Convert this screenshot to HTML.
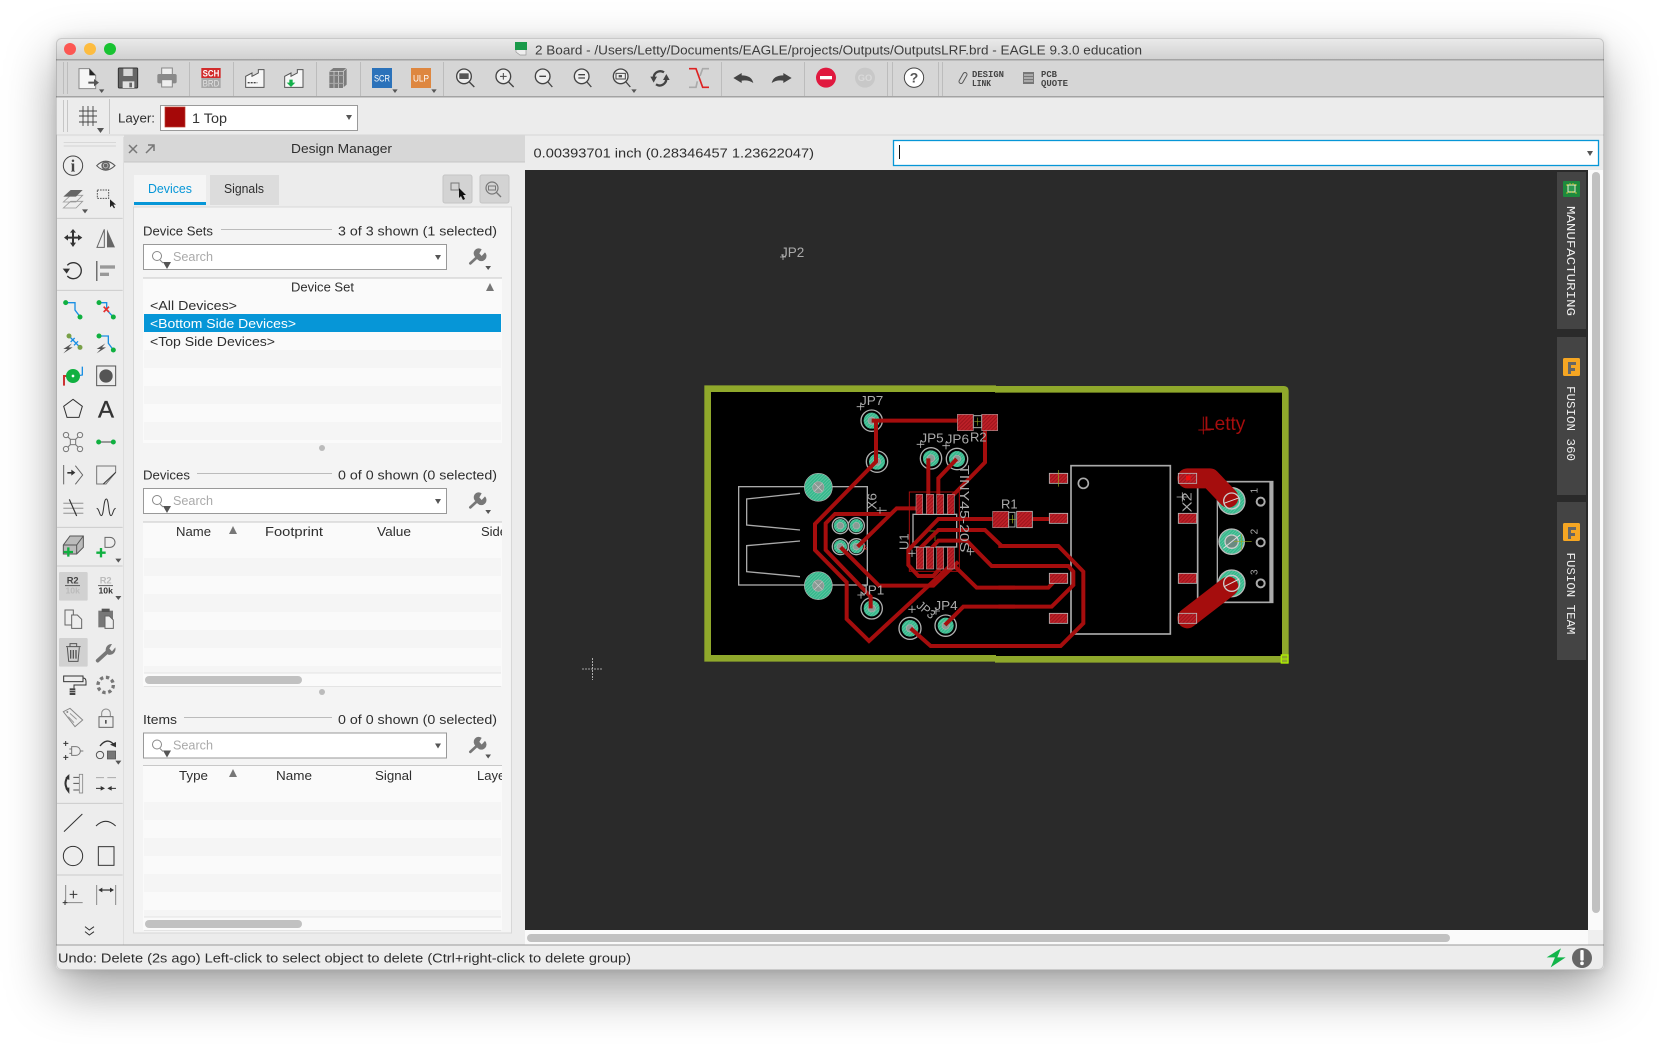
<!DOCTYPE html>
<html><head><meta charset="utf-8"><title>EAGLE</title>
<style>
html,body{margin:0;padding:0;background:#fff;width:1659px;height:1044px;overflow:hidden}
#sh{position:absolute;left:56px;top:38px;width:1548px;height:932px;border-radius:5px;box-shadow:0 20px 50px rgba(0,0,0,.38),0 0 10px rgba(0,0,0,.12)}
svg{position:absolute;left:0;top:0}
text{font-family:"Liberation Sans",sans-serif}
.t{font-size:13px;fill:#2e2e2e}
.m{font-family:"Liberation Mono",monospace;font-size:12px;fill:#eee}
.vt{stroke:#a50d0d;stroke-width:12;fill:none}
.gl{fill:#aaa;font-size:38px}
</style></head><body>
<div id="sh"></div>
<svg width="1659" height="1044" viewBox="0 0 1659 1044" xmlns="http://www.w3.org/2000/svg">
<defs>
<linearGradient id="tb" x1="0" y1="0" x2="0" y2="1"><stop offset="0" stop-color="#ebebeb"/><stop offset="1" stop-color="#d1d1d1"/></linearGradient>
<clipPath id="win"><rect x="56" y="38" width="1548" height="932" rx="5"/></clipPath>
<clipPath id="tbl"><rect x="143" y="270" width="359" height="670"/></clipPath>
<pattern id="h" width="8" height="8" patternUnits="userSpaceOnUse" patternTransform="rotate(-45)"><rect width="8" height="8" fill="#bd2028"/><rect width="8" height="3" fill="#9c141b"/></pattern>
<pattern id="g" width="7" height="7" patternUnits="userSpaceOnUse" patternTransform="rotate(-45)"><rect width="7" height="7" fill="#35b88c"/><rect width="7" height="2" fill="#6cc9a8"/></pattern>
</defs>
<g clip-path="url(#win)">
<rect x="56" y="38" width="1548" height="932" fill="#ececec"/>
<!-- title -->
<rect x="56" y="38" width="1548" height="21" fill="url(#tb)"/>
<rect x="56" y="59" width="1548" height="1.5" fill="#a3a3a3"/>
<circle cx="70" cy="49" r="6" fill="#fc5753"/><circle cx="90" cy="49" r="6" fill="#fdbc40"/><circle cx="110" cy="49" r="6" fill="#19c332"/>
<path d="M516,43H526V55H520L516,52Z" fill="#eee" stroke="#999" stroke-width=".7"/><rect x="515" y="42" width="12" height="8" fill="#1a9a4a"/>
<text x="535" y="54.5" class="t" textLength="607" lengthAdjust="spacingAndGlyphs" style="fill:#3c3c3c">2 Board - /Users/Letty/Documents/EAGLE/projects/Outputs/OutputsLRF.brd - EAGLE 9.3.0 education</text>
<!-- toolbar 1 -->
<rect x="56" y="60.5" width="1548" height="36" fill="#d6d6d6"/>
<rect x="56" y="96" width="1548" height="1.5" fill="#a3a3a3"/>
<g fill="#bcbcbc"><rect x="63" y="62" width="1" height="32"/><rect x="67" y="62" width="1" height="32"/><rect x="189" y="62" width="1" height="34"/><rect x="233" y="62" width="1" height="34"/><rect x="316" y="62" width="1" height="34"/><rect x="360" y="62" width="1" height="34"/><rect x="443" y="62" width="1" height="34"/><rect x="721" y="62" width="1" height="34"/><rect x="804" y="62" width="1" height="34"/><rect x="887" y="62" width="1" height="34"/><rect x="892" y="62" width="1" height="34"/><rect x="938" y="62" width="1" height="34"/><rect x="942" y="62" width="1" height="34"/></g>
<g transform="translate(60 58) scale(.33333)">
<path d="M57,32H88L107,52V92H57Z" fill="#f6f6f6" stroke="#888" stroke-width="3"/><path d="M88,32L107,52H88Z" fill="#222"/>
<path d="M85,71H102V63L117,74L102,85V77H85Z" fill="#555"/><path d="M117,94H133L125,105Z" fill="#555"/>
<rect x="175" y="30" width="58" height="60" rx="3" fill="#666" stroke="#333" stroke-width="3"/><rect x="190" y="32" width="28" height="22" fill="#d6d6d6"/><rect x="188" y="70" width="35" height="20" fill="#e2e2e2"/><rect x="208" y="74" width="8" height="14" fill="#666"/>
<rect x="305" y="30" width="32" height="22" fill="#eee" stroke="#888" stroke-width="3"/><rect x="292" y="48" width="58" height="28" rx="5" fill="#8a8a8a"/><rect x="305" y="65" width="32" height="22" fill="#eee" stroke="#888" stroke-width="3"/>
<rect x="424" y="30" width="58" height="30" fill="#d12b2b"/><rect x="424" y="60" width="58" height="30" fill="#a8a8a8"/>
<text x="428" y="56" textLength="50" lengthAdjust="spacingAndGlyphs" style="font-size:27px;fill:#fff;font-weight:bold">SCH</text>
<text x="428" y="86" textLength="50" lengthAdjust="spacingAndGlyphs" style="font-size:27px;fill:#e2e2e2">BRD</text>
<path d="M557,88V55L576,45V55L595,45V35H612V88Z" fill="#f7f7f7" stroke="#555" stroke-width="3"/><path d="M563,74H592" stroke="#444" stroke-width="4" stroke-dasharray="6 3"/>
<path d="M674,88V55L693,45V55L712,45V35H729V88Z" fill="#f7f7f7" stroke="#555" stroke-width="3"/><path d="M688,65H698V74H706L693,87L680,74H688Z" fill="#12b04a"/>
<path d="M808,40L820,30H860V80L848,90H808Z" fill="#7c7c7c"/><path d="M822,40V90M836,40V90M850,40V90M808,40H850L860,30" stroke="#ddd" stroke-width="2" fill="none"/><path d="M808,52H850M808,76H850" stroke="#aaa" stroke-width="3"/>
<rect x="936" y="30" width="60" height="60" fill="#2b72ba"/><text x="942" y="70" textLength="48" lengthAdjust="spacingAndGlyphs" style="font-size:27px;fill:#fff">SCR</text><path d="M997,94H1013L1005,105Z" fill="#555"/>
<rect x="1053" y="30" width="60" height="60" fill="#de8740"/><text x="1059" y="70" textLength="48" lengthAdjust="spacingAndGlyphs" style="font-size:27px;fill:#fff">ULP</text><path d="M1114,94H1130L1122,105Z" fill="#555"/>
<g fill="#eee" stroke="#444" stroke-width="4"><path d="M1228,72L1243,87" fill="none"/><circle cx="1212" cy="55" r="22"/></g><rect x="1198" y="46" width="28" height="17" fill="#555"/>
<g fill="#eee" stroke="#444" stroke-width="4"><path d="M1346,72L1361,87" fill="none"/><circle cx="1330" cy="55" r="22"/><path d="M1330,45V65M1320,55H1340" fill="none" stroke-width="3"/></g>
</g>
<g transform="translate(510 58) scale(.33333)">
<g fill="#eee" stroke="#444" stroke-width="4"><path d="M114,72L127,87" fill="none"/><circle cx="98" cy="55" r="22"/><path d="M88,55H108" fill="none"/>
<path d="M231,72L244,87" fill="none"/><circle cx="215" cy="55" r="22"/><path d="M205,50H225M205,60H225" fill="none"/>
<path d="M348,72L361,87" fill="none"/><circle cx="332" cy="55" r="22"/><rect x="318" y="46" width="28" height="17" stroke-width="3"/><rect x="326" y="51" width="10" height="7" fill="#555" stroke="none"/></g>
<path d="M364,94H380L372,105Z" fill="#555"/>
<path d="M431,58A20,20 0 0 1 462,43" fill="none" stroke="#444" stroke-width="7"/><path d="M469,64A20,20 0 0 1 438,79" fill="none" stroke="#444" stroke-width="7"/><path d="M421,56H441L431,74Z" fill="#444"/><path d="M459,66H479L469,48Z" fill="#444"/>
<path d="M537,32H558L578,88H597" fill="none" stroke="#d22" stroke-width="5"/><path d="M597,32H578L570,54M562,70L558,88H537" fill="none" stroke="#aaa" stroke-width="5"/>
<path d="M670,60L695,45V52Q725,52 730,75Q715,65 695,68V75Z" fill="#444"/><path d="M845,60L820,45V52Q790,52 785,75Q800,65 820,68V75Z" fill="#444"/>
<circle cx="948" cy="59" r="30" fill="#e0193f"/><rect x="930" y="54" width="36" height="10" fill="#fff"/>
<circle cx="1065" cy="59" r="30" fill="#c8c8c8"/><text x="1065" y="69" text-anchor="middle" style="font-size:28px;fill:#d9d9d9;font-weight:bold">GO</text>
<circle cx="1212" cy="59" r="29" fill="#fff" stroke="#444" stroke-width="3"/><text x="1212" y="74" text-anchor="middle" style="font-size:42px;fill:#555;font-weight:bold">?</text>
</g>
<!-- design link -->
<g stroke="#555" fill="none" stroke-width="1"><rect x="961" y="72" width="4" height="12" rx="2" transform="rotate(30 963 78)"/></g>
<text x="972" y="77" textLength="32" lengthAdjust="spacingAndGlyphs" style="font-size:9.5px;fill:#444;font-family:'Liberation Mono',monospace;font-weight:bold">DESIGN</text>
<text x="972" y="86" textLength="19" lengthAdjust="spacingAndGlyphs" style="font-size:9.5px;fill:#444;font-family:'Liberation Mono',monospace;font-weight:bold">LINK</text>
<rect x="1023" y="72" width="11" height="12" fill="#777"/><path d="M1024,75H1033M1024,78H1033M1024,81H1033" stroke="#ddd"/>
<text x="1041" y="77" textLength="16" lengthAdjust="spacingAndGlyphs" style="font-size:9.5px;fill:#444;font-family:'Liberation Mono',monospace;font-weight:bold">PCB</text>
<text x="1041" y="86" textLength="27" lengthAdjust="spacingAndGlyphs" style="font-size:9.5px;fill:#444;font-family:'Liberation Mono',monospace;font-weight:bold">QUOTE</text>
<!-- toolbar 2 -->
<rect x="56" y="97.5" width="1548" height="37" fill="#ececec"/><rect x="56" y="134.5" width="1548" height="1" fill="#d6d6d6"/>
<g fill="#c6c6c6"><rect x="63" y="100" width="1" height="32"/><rect x="67" y="100" width="1" height="32"/><rect x="109" y="99" width="1" height="35"/></g>
<path d="M83,106V126M88,106V126M93,106V126M79,111H97M79,116H97M79,122H97" stroke="#444" stroke-width=".9" fill="none"/>
<path d="M97,128H104L100.500,133Z" fill="#555"/>
<text x="118" y="122.500" class="t" textLength="37" lengthAdjust="spacingAndGlyphs">Layer:</text>
<rect x="160.500" y="105.500" width="197" height="25" fill="#fff" stroke="#9a9a9a"/>
<rect x="165" y="107" width="20" height="20" fill="#a50808" stroke="#c04030" stroke-width=".7"/>
<text x="192" y="123" textLength="35" lengthAdjust="spacingAndGlyphs" style="font-size:14px;fill:#333">1 Top</text>
<path d="M346,115H352L349,120Z" fill="#555"/>
<!-- coord bar -->
<text x="533.500" y="157.500" class="t" textLength="280.500" lengthAdjust="spacingAndGlyphs">0.00393701 inch (0.28346457 1.23622047)</text>
<rect x="893.500" y="140.500" width="705" height="25" fill="#fff" stroke="#0696d7" stroke-width="1.300"/>
<rect x="899" y="145" width="1" height="14" fill="#111"/><path d="M1587,151H1593L1590,156Z" fill="#555"/>
<!-- left toolbar -->
<rect x="56" y="135" width="1" height="810" fill="#d0d0d0"/>
<rect x="57" y="137" width="66" height="808" fill="#ededed"/>
<rect x="123" y="137" width="1" height="808" fill="#dedede"/>
<g fill="none" stroke="#ccc" stroke-width="2"><path d="M41,37H198M41,48H198" transform="translate(50 130) scale(.33333)"/></g>
<g transform="translate(50 130) scale(.33333)">
<path d="M20,265H218M20,481H218M20,1192H218" stroke="#ccc" stroke-width="3"/>
<circle cx="69" cy="107" r="29" fill="none" stroke="#444" stroke-width="3"/><text x="69" y="125" text-anchor="middle" style="font-family:'Liberation Serif',serif;font-size:50px;font-weight:bold;fill:#444">i</text>
<path d="M140,107Q167,80 195,107Q167,134 140,107Z" fill="none" stroke="#555" stroke-width="3"/><circle cx="167" cy="107" r="13" fill="#666"/><circle cx="167" cy="107" r="7" fill="none" stroke="#ddd" stroke-width="2"/>
<path d="M40,234L62,214H98L78,234Z M40,216L62,196H98L78,216Z" fill="none" stroke="#999" stroke-width="2.500"/><path d="M40,200L62,180H98L78,200Z" fill="#666"/><path d="M96,238H114L105,250Z" fill="#555"/>
<rect x="142" y="180" width="34" height="25" fill="none" stroke="#555" stroke-width="3" stroke-dasharray="5 3"/><path d="M180,208V232L186,226L192,235L195,233L190,224H198Z" fill="#222"/>
<path d="M69,297L60,308H66V320H54V314L42,323L54,332V326H66V338H60L69,351L78,338H72V326H84V332L97,323L84,314V320H72V308H78Z" fill="#333"/>
<path d="M141,352L163,298V352Z" fill="none" stroke="#666" stroke-width="3"/><path d="M171,298L195,352H171Z" fill="#666"/>
<path d="M52,406A24,24 0 1 1 52,438" fill="none" stroke="#333" stroke-width="4"/><path d="M38,416H60L50,431Z" fill="#333"/>
<rect x="139" y="393" width="3" height="60" fill="#333"/><rect x="150" y="406" width="45" height="10" fill="#999"/><rect x="150" y="428" width="27" height="10" fill="#999"/>
<path d="M47,518H75V540L90,560" fill="none" stroke="#1a8fe3" stroke-width="4"/><circle cx="47" cy="518" r="7.500" fill="#10b040"/><circle cx="90" cy="561" r="7.500" fill="#10b040"/>
<path d="M147,518H170V540L190,561" fill="none" stroke="#1a8fe3" stroke-width="4"/><circle cx="147" cy="518" r="7.500" fill="#10b040"/><circle cx="190" cy="561" r="7.500" fill="#10b040"/><path d="M161,530L177,546M177,530L161,546" stroke="#e63030" stroke-width="5"/>
<path d="M57,618L90,652M62,636L74,624M72,646L84,634" fill="none" stroke="#1a8fe3" stroke-width="4"/><circle cx="57" cy="618" r="7.500" fill="#79a048"/><circle cx="90" cy="652" r="7.500" fill="#79a048"/><path d="M66,640L40,657H52L40,670L68,652H56Z" fill="#555"/>
<path d="M147,618H175V640L190,660" fill="none" stroke="#1a8fe3" stroke-width="4"/><circle cx="147" cy="618" r="7.500" fill="#10b040"/><circle cx="190" cy="660" r="7.500" fill="#10b040"/><path d="M166,640L140,657H152L140,670L168,652H156Z" fill="#555"/>
<path d="M42,767V738H50" fill="none" stroke="#c33" stroke-width="6"/><path d="M80,738L97,735V710" fill="none" stroke="#1a8fe3" stroke-width="4"/><circle cx="69" cy="738" r="21" fill="#10b040"/><circle cx="69" cy="738" r="4" fill="#fff"/>
<rect x="140" y="708" width="57" height="59" fill="none" stroke="#555" stroke-width="3"/><circle cx="168" cy="738" r="20" fill="#555"/>
<path d="M69,808L97,829L87,862H51L41,829Z" fill="none" stroke="#333" stroke-width="3"/>
<text x="168" y="862" text-anchor="middle" style="font-size:72px;fill:#333;stroke:#333;stroke-width:1">A</text>
<g fill="none" stroke="#777" stroke-width="3"><path d="M48,915L90,957M90,915L48,957"/><circle cx="48" cy="915" r="8" fill="#eee"/><circle cx="90" cy="915" r="8" fill="#eee"/><circle cx="48" cy="957" r="8" fill="#eee"/><circle cx="90" cy="957" r="8" fill="#eee"/><rect x="61" y="928" width="16" height="16" fill="#eee"/></g>
<path d="M146,936H190" stroke="#888" stroke-width="5"/><circle cx="146" cy="936" r="7.500" fill="#10b040"/><circle cx="190" cy="936" r="7.500" fill="#10b040"/>
<path d="M41,1005V1063M76,1007L98,1035L76,1063" fill="none" stroke="#666" stroke-width="3"/><path d="M52,1026H64V1019L76,1028L64,1037V1031H52Z" fill="#333"/>
<path d="M140,1008H197V1027L168,1062H140Z" fill="none" stroke="#777" stroke-width="3"/><path d="M197,1027L160,1062" stroke="#333" stroke-width="3"/>
<path d="M40,1120H100M40,1135H100M40,1150H100" stroke="#aaa" stroke-width="4"/><path d="M58,1108L80,1158" stroke="#333" stroke-width="3.500"/>
<path d="M140,1135c8,0 8,22 14,22c8,0 6,-50 15,-50c8,0 6,50 14,50c6,0 6,-22 14,-22" fill="none" stroke="#333" stroke-width="3"/>
</g>
<g transform="translate(50 540) scale(.33333)">
<path d="M20,78H218M20,790H218M20,1005H218" stroke="#ccc" stroke-width="3"/>
<path d="M40,15L60,-12H100V22L80,42H40Z" fill="#bbb" stroke="#555" stroke-width="3"/><path d="M40,15H80V42M80,15L100,-12" fill="none" stroke="#555" stroke-width="3"/>
<path d="M55,22V50M41,36H69" stroke="#10b040" stroke-width="7"/>
<path d="M165,-8H180A14,14 0 0 1 180,22H165Z" fill="none" stroke="#666" stroke-width="3"/><path d="M153,24V52M139,38H167" stroke="#10b040" stroke-width="7"/><path d="M196,56H214L205,68Z" fill="#555"/>
<rect x="27" y="96" width="86" height="86" rx="4" fill="#d1d1d1"/>
<text x="68" y="131" text-anchor="middle" style="font-size:28px;font-weight:bold;fill:#444">R2</text><path d="M45,137H90" stroke="#444" stroke-width="2.500"/><text x="68" y="161" text-anchor="middle" style="font-size:26px;font-weight:bold;fill:#bbb">10k</text>
<text x="167" y="131" text-anchor="middle" style="font-size:28px;font-weight:bold;fill:#bbb">R2</text><path d="M144,137H189" stroke="#444" stroke-width="2.500"/><text x="167" y="161" text-anchor="middle" style="font-size:26px;font-weight:bold;fill:#333">10k</text><path d="M196,168H214L205,180Z" fill="#555"/>
<path d="M45,210H70V255H45Z" fill="#eee" stroke="#666" stroke-width="3"/><path d="M65,225H82L95,238V265H65Z" fill="#eee" stroke="#666" stroke-width="3"/>
<rect x="145" y="212" width="44" height="50" fill="#777"/><rect x="155" y="206" width="24" height="10" fill="#555"/><path d="M165,228H178L190,240V265H165Z" fill="#eee" stroke="#666" stroke-width="3"/>
<rect x="27" y="294" width="86" height="86" rx="4" fill="#d1d1d1"/>
<path d="M48,320H92M60,320V311H80V320M52,322L56,364H84L88,322" fill="none" stroke="#555" stroke-width="3"/><path d="M62,330V356M70,330V356M78,330V356" stroke="#555" stroke-width="4"/>
<path d="M143,362L176,332" stroke="#777" stroke-width="11" stroke-linecap="round"/><path d="M168,336A18,18 0 0 1 186,312L178,326L186,334L196,322A18,18 0 0 1 174,344Z" fill="#777"/>
<rect x="41" y="408" width="58" height="17" fill="#eee" stroke="#333" stroke-width="3"/><path d="M99,414Q108,414 108,424V435H72V445" fill="none" stroke="#333" stroke-width="3"/><rect x="59" y="445" width="17" height="20" fill="#444"/><path d="M59,451H76M59,458H76" stroke="#ddd" stroke-width="2"/>
<circle cx="167" cy="435" r="23" fill="none" stroke="#777" stroke-width="10" stroke-dasharray="10 8.060"/>
<path d="M40,515L60,505L98,540L75,560Z" fill="none" stroke="#888" stroke-width="3"/><circle cx="52" cy="516" r="3" fill="#888"/><path d="M60,520L80,538M55,530L72,548" stroke="#999" stroke-width="3"/>
<rect x="147" y="530" width="42" height="32" fill="none" stroke="#666" stroke-width="3"/><path d="M155,530V520A13,13 0 0 1 181,520V530" fill="none" stroke="#888" stroke-width="3"/><rect x="165" y="540" width="5" height="11" fill="#555"/>
<path d="M47,603V618M40,610H55M47,645V660M40,652H55" stroke="#333" stroke-width="3"/><path d="M65,620H78A13,13 0 0 1 78,646H65ZM92,633H100M58,627H65M58,640H65" fill="none" stroke="#777" stroke-width="3"/>
<path d="M150,618Q170,592 190,612" fill="none" stroke="#333" stroke-width="4"/><path d="M180,614L198,606V622Z" fill="#333"/><circle cx="150" cy="645" r="11" fill="none" stroke="#555" stroke-width="3"/><rect x="172" y="633" width="25" height="24" fill="#777" stroke="#555" stroke-width="2"/><path d="M196,662H214L205,674Z" fill="#555"/>
<path d="M55,708Q38,730 55,752" fill="none" stroke="#333" stroke-width="6"/><path d="M46,714L58,702V720Z M46,746L58,762V742Z" fill="#333"/><path d="M70,712H88M70,730H88M70,750H88" stroke="#555" stroke-width="3"/><rect x="88" y="703" width="10" height="56" fill="none" stroke="#888" stroke-width="2.500"/>
<path d="M138,713H162M172,713H198" stroke="#aaa" stroke-width="3"/><path d="M138,745H155M198,745H182" stroke="#333" stroke-width="3"/><path d="M152,738L165,745L152,752ZM185,738L172,745L185,752Z" fill="#333"/>
<path d="M42,875L97,822" stroke="#333" stroke-width="3"/><path d="M138,858Q167,830 197,858" fill="none" stroke="#333" stroke-width="3"/>
<circle cx="69" cy="948" r="29" fill="none" stroke="#333" stroke-width="3"/><rect x="145" y="920" width="47" height="56" fill="none" stroke="#333" stroke-width="3"/>
<path d="M47,1035V1085M47,1088H98" stroke="#888" stroke-width="3"/><path d="M70,1052V1075M59,1063H82M45,1081V1095M38,1088H52" stroke="#333" stroke-width="3"/>
<path d="M140,1035V1095M197,1035V1095" stroke="#888" stroke-width="3"/><path d="M155,1050H182" stroke="#333" stroke-width="3.500"/><path d="M145,1050L157,1043V1057ZM192,1050L180,1043V1057Z" fill="#333"/>
<path d="M105,1160L118,1170L132,1160M105,1175L118,1185L132,1175" fill="none" stroke="#333" stroke-width="3"/>
</g>
<!-- design manager -->
<rect x="124" y="135" width="401" height="27" fill="#d7d7d7"/><rect x="124" y="161.500" width="401" height="1" fill="#c6c6c6"/>
<path d="M129,145L137,153M137,145L129,153" stroke="#777" stroke-width="1.500"/><path d="M146,153L154,145M148,145H154V151" fill="none" stroke="#777" stroke-width="1.500"/>
<text x="291" y="153" class="t" textLength="101" lengthAdjust="spacingAndGlyphs">Design Manager</text>
<rect x="134" y="175" width="72" height="30" fill="#f5f5f5"/><rect x="134" y="202" width="72" height="3" fill="#0696d7"/>
<rect x="210" y="175" width="69" height="30" fill="#dcdcdc"/>
<text x="148" y="193" class="t" textLength="44" lengthAdjust="spacingAndGlyphs" style="fill:#0696d7">Devices</text>
<text x="224" y="193" class="t" textLength="40" lengthAdjust="spacingAndGlyphs">Signals</text>
<rect x="443" y="175" width="29" height="28" rx="2" fill="#d3d3d3" stroke="#c4c4c4"/><rect x="451" y="183" width="8" height="7" fill="none" stroke="#777"/><path d="M459,188V198L461,196L463,200L465,199L463,195H466Z" fill="#111"/>
<rect x="480" y="175" width="29" height="28" rx="2" fill="#d3d3d3" stroke="#c4c4c4"/><circle cx="492" cy="188" r="6" fill="none" stroke="#777" stroke-width="1.200"/><rect x="488.500" y="186" width="7" height="4" fill="none" stroke="#777"/><path d="M496,192L501,197" stroke="#777" stroke-width="1.300"/>
<rect x="133.500" y="207" width="378" height="726" fill="#f4f4f4" stroke="#d8d8d8"/>
<!-- section titles -->
<g>
<text x="143" y="235.500" class="t" textLength="70" lengthAdjust="spacingAndGlyphs">Device Sets</text><rect x="221" y="229" width="111" height="1" fill="#bbb"/>
<text x="338" y="235.500" class="t" textLength="159" lengthAdjust="spacingAndGlyphs">3 of 3 shown (1 selected)</text>
<text x="143" y="479.500" class="t" textLength="47" lengthAdjust="spacingAndGlyphs">Devices</text><rect x="197" y="473" width="135" height="1" fill="#bbb"/>
<text x="338" y="479.500" class="t" textLength="159" lengthAdjust="spacingAndGlyphs">0 of 0 shown (0 selected)</text>
<text x="143" y="724" class="t" textLength="34" lengthAdjust="spacingAndGlyphs">Items</text><rect x="184" y="717" width="148" height="1" fill="#bbb"/>
<text x="338" y="724" class="t" textLength="159" lengthAdjust="spacingAndGlyphs">0 of 0 shown (0 selected)</text>
</g>
<!-- search boxes -->
<g transform="translate(0 0)"><rect x="143.500" y="244.500" width="303" height="25" fill="#fff" stroke="#999"/><circle cx="157" cy="256" r="4.500" fill="none" stroke="#888"/><path d="M160,260L163,263" stroke="#888"/><path d="M163,262H171L167,269Z" fill="#555"/><text x="173" y="261" class="t" textLength="40" lengthAdjust="spacingAndGlyphs" style="fill:#aaa">Search</text><path d="M435,255H441L438,260Z" fill="#555"/><g transform="translate(125 130) scale(.33333)"><path d="M1036,400L1060,378" stroke="#777" stroke-width="8" stroke-linecap="round"/><path d="M1052,382A15,15 0 0 1 1070,358L1063,370L1070,378L1080,367A15,15 0 0 1 1058,389Z" fill="#777"/><path d="M1081,408H1098L1089.500,420Z" fill="#555"/></g></g>
<g transform="translate(0 244)"><rect x="143.500" y="244.500" width="303" height="25" fill="#fff" stroke="#999"/><circle cx="157" cy="256" r="4.500" fill="none" stroke="#888"/><path d="M160,260L163,263" stroke="#888"/><path d="M163,262H171L167,269Z" fill="#555"/><text x="173" y="261" class="t" textLength="40" lengthAdjust="spacingAndGlyphs" style="fill:#aaa">Search</text><path d="M435,255H441L438,260Z" fill="#555"/><g transform="translate(125 130) scale(.33333)"><path d="M1036,400L1060,378" stroke="#777" stroke-width="8" stroke-linecap="round"/><path d="M1052,382A15,15 0 0 1 1070,358L1063,370L1070,378L1080,367A15,15 0 0 1 1058,389Z" fill="#777"/><path d="M1081,408H1098L1089.500,420Z" fill="#555"/></g></g>
<g transform="translate(0 488.500)"><rect x="143.500" y="244.500" width="303" height="25" fill="#fff" stroke="#999"/><circle cx="157" cy="256" r="4.500" fill="none" stroke="#888"/><path d="M160,260L163,263" stroke="#888"/><path d="M163,262H171L167,269Z" fill="#555"/><text x="173" y="261" class="t" textLength="40" lengthAdjust="spacingAndGlyphs" style="fill:#aaa">Search</text><path d="M435,255H441L438,260Z" fill="#555"/><g transform="translate(125 130) scale(.33333)"><path d="M1036,400L1060,378" stroke="#777" stroke-width="8" stroke-linecap="round"/><path d="M1052,382A15,15 0 0 1 1070,358L1063,370L1070,378L1080,367A15,15 0 0 1 1058,389Z" fill="#777"/><path d="M1081,408H1098L1089.500,420Z" fill="#555"/></g></g>
<!-- table 1 -->
<rect x="143" y="278" width="359" height="165" fill="#fafafa"/><rect x="143" y="277.500" width="359" height="1" fill="#c8c8c8"/>
<g fill="#f5f5f5"><rect x="144" y="350" width="357" height="18"/><rect x="144" y="386" width="357" height="18"/><rect x="144" y="422" width="357" height="18"/></g>
<rect x="144" y="314" width="357" height="18" fill="#0696d7"/>
<text x="291" y="291.500" class="t" textLength="63" lengthAdjust="spacingAndGlyphs">Device Set</text><path d="M486,291L490,283L494,291Z" fill="#777"/>
<text x="150" y="310" class="t" textLength="87" lengthAdjust="spacingAndGlyphs">&lt;All Devices&gt;</text>
<text x="150" y="328" class="t" textLength="146" lengthAdjust="spacingAndGlyphs" style="fill:#fff">&lt;Bottom Side Devices&gt;</text>
<text x="150" y="346" class="t" textLength="125" lengthAdjust="spacingAndGlyphs">&lt;Top Side Devices&gt;</text>
<circle cx="322" cy="448" r="3" fill="#bbb"/>
<!-- table 2 -->
<rect x="143" y="522" width="359" height="164" fill="#fafafa"/><rect x="143" y="521.500" width="359" height="1" fill="#c8c8c8"/>
<g fill="#f5f5f5"><rect x="144" y="558" width="357" height="18"/><rect x="144" y="594" width="357" height="18"/><rect x="144" y="630" width="357" height="18"/><rect x="144" y="666" width="357" height="7"/></g>
<rect x="144" y="672.500" width="357" height="1" fill="#e4e4e4"/><rect x="144" y="686" width="357" height="1" fill="#e4e4e4"/>
<rect x="145" y="676" width="157" height="8" rx="4" fill="#c1c1c1"/>
<!-- table 3 -->
<rect x="143" y="766" width="359" height="164" fill="#fafafa"/><rect x="143" y="765" width="359" height="1" fill="#c8c8c8"/>
<g fill="#f5f5f5"><rect x="144" y="802" width="357" height="18"/><rect x="144" y="838" width="357" height="18"/><rect x="144" y="874" width="357" height="18"/><rect x="144" y="910" width="357" height="7"/></g>
<rect x="144" y="916.500" width="357" height="1" fill="#e4e4e4"/><rect x="144" y="930" width="357" height="1" fill="#e4e4e4"/>
<rect x="145" y="920" width="157" height="8" rx="4" fill="#c1c1c1"/>
<g clip-path="url(#tbl)">
<text x="176" y="536" class="t" textLength="35" lengthAdjust="spacingAndGlyphs">Name</text><text x="265" y="536" class="t" textLength="58" lengthAdjust="spacingAndGlyphs">Footprint</text><text x="377" y="536" class="t" textLength="34" lengthAdjust="spacingAndGlyphs">Value</text><text x="481" y="536" class="t">Side</text>
<text x="179" y="780" class="t" textLength="29" lengthAdjust="spacingAndGlyphs">Type</text><text x="276" y="780" class="t" textLength="36" lengthAdjust="spacingAndGlyphs">Name</text><text x="375" y="780" class="t" textLength="37" lengthAdjust="spacingAndGlyphs">Signal</text><text x="477" y="780" class="t">Layer</text>
</g>
<path d="M229,534L233,526L237,534Z" fill="#777"/>
<circle cx="322" cy="692" r="3" fill="#bbb"/>
<path d="M229,777L233,769L237,777Z" fill="#777"/>
<!-- canvas -->
<rect x="525" y="170" width="1063" height="760" fill="#2a2a2a"/>
<rect x="1588" y="170" width="15" height="760" fill="#fafafa"/><rect x="1592" y="172" width="8" height="741" rx="4" fill="#c1c1c1"/>
<rect x="525" y="930" width="1063" height="15" fill="#fafafa"/><rect x="527" y="934" width="923" height="8" rx="4" fill="#c1c1c1"/>
<rect x="1588" y="930" width="15" height="15" fill="#efefef"/>
<!-- stray items -->
<path d="M780,257H786M783,254V260" stroke="#bbb" stroke-width=".8"/>
<text x="781" y="257" style="font-size:13.500px;fill:#aaa">JP2</text>
<path d="M582,669H603M592.500,658V680" stroke="#ccc" stroke-width=".8" stroke-dasharray="2 1"/>
<!-- board left -->
<rect x="707" y="388" width="578" height="271" fill="#000"/>
<g transform="translate(695 375) scale(.33333)">
<path d="M38,41H903M38,31V860M38,850H903" fill="none" stroke="#8fa82b" stroke-width="20"/>
<!-- connector -->
<rect x="131" y="335" width="386" height="295" fill="none" stroke="#aaa" stroke-width="4"/>
<path d="M315,355L155,372V450L315,465M315,498L155,512V590L315,605" fill="none" stroke="#aaa" stroke-width="4"/>
<!-- vias -->
<g stroke="#b0b0b0" stroke-width="4" fill="#000">
<circle cx="436" cy="452" r="24"/><circle cx="484" cy="452" r="24"/><circle cx="436" cy="515" r="24"/><circle cx="484" cy="515" r="24"/>
<circle cx="530" cy="137" r="32"/><circle cx="546" cy="260" r="32"/><circle cx="708" cy="250" r="32"/><circle cx="786" cy="252" r="32"/><circle cx="530" cy="700" r="32"/><circle cx="645" cy="760" r="33"/><circle cx="752" cy="752" r="32"/>
</g>
<g fill="url(#g)">
<circle cx="370" cy="337" r="42" stroke="#b0b0b0" stroke-width="2"/><circle cx="370" cy="632" r="42" stroke="#b0b0b0" stroke-width="2"/>
<circle cx="436" cy="452" r="20"/><circle cx="484" cy="452" r="20"/><circle cx="436" cy="515" r="20"/><circle cx="484" cy="515" r="20"/>
<circle cx="530" cy="137" r="24"/><circle cx="546" cy="260" r="24"/><circle cx="708" cy="250" r="24"/><circle cx="786" cy="252" r="24"/><circle cx="530" cy="700" r="24"/><circle cx="645" cy="760" r="25"/><circle cx="752" cy="752" r="24"/>
</g>
<g fill="#8a9a94" stroke="#b0b0b0" stroke-width="2"><circle cx="370" cy="337" r="17"/><circle cx="370" cy="632" r="17"/><circle cx="436" cy="452" r="10"/><circle cx="484" cy="452" r="10"/><circle cx="436" cy="515" r="10"/><circle cx="484" cy="515" r="10"/><circle cx="530" cy="137" r="11"/><circle cx="546" cy="260" r="11"/><circle cx="708" cy="250" r="11"/><circle cx="786" cy="252" r="11"/><circle cx="530" cy="700" r="11"/><circle cx="645" cy="760" r="11"/><circle cx="752" cy="752" r="11"/></g>
<path d="M358,325L382,349M382,325L358,349M358,620L382,644M382,620L358,644" stroke="#ccc" stroke-width="2"/>
<!-- IC outline -->
<rect x="643" y="351" width="150" height="238" fill="none" stroke="#a50d0d" stroke-width="3"/>
<rect x="654" y="418" width="131" height="98" fill="none" stroke="#aaa" stroke-width="4"/>
<path d="M720,468V498M695,468H745" stroke="#8a9a20" stroke-width="2"/>
<!-- traces -->
<g class="vt">
<path d="M530,137H790M543,137V260L360,447V525L455,622V732L522,798L770,568"/>
<path d="M870,145V262L770,365V390"/>
<path d="M700,250V390"/>
<path d="M785,252L730,310V390"/>
<path d="M672,400H605L488,515"/>
<path d="M585,417H420L392,445V525L527,665V700"/>
<path d="M437,517L552,632H715L790,560"/>
<path d="M892,432H730L640,525V570L670,603H715L735,580"/>
<path d="M960,513H920L870,465H730L665,530"/>
<path d="M960,573H890L815,497H730L700,530"/>
<path d="M960,638H845L770,565"/>
<path d="M750,750L805,695H960"/>
<path d="M647,760L707,813H960"/>
</g>
<!-- IC pads -->
<g fill="url(#h)" stroke="#b8b8b8" stroke-width="1.500">
<rect x="663" y="358" width="20" height="60"/><rect x="694" y="358" width="22" height="60"/><rect x="725" y="358" width="21" height="60"/><rect x="757" y="358" width="21" height="60"/>
<rect x="664" y="517" width="22" height="65"/><rect x="694" y="517" width="22" height="65"/><rect x="725" y="517" width="21" height="65"/><rect x="757" y="517" width="21" height="65"/>
<rect x="787" y="118" width="48" height="49"/><rect x="860" y="118" width="48" height="49"/><rect x="893" y="409" width="48" height="49"/>
</g>
<rect x="835" y="122" width="25" height="36" fill="#000" stroke="#aaa" stroke-width="3"/><path d="M848,128V152M838,140H858" stroke="#8a9a20" stroke-width="2"/>
<rect x="941" y="412" width="19" height="44" fill="#000" stroke="#aaa" stroke-width="3"/>
<text x="504" y="523" style="font-size:18px;fill:#f33">&amp;</text>
<!-- labels -->
<g stroke="#bbb" stroke-width="2.500" fill="none"><path d="M485,95H508M497,84V106M665,208H688M677,197V219M742,212H765M753,201V223M487,660H510M498,649V671M640,703H662M651,692V714M712,708H735M723,697V719M555,396V416M545,406H575M640,535H662M651,524V546M815,530H838M826,519V541"/></g>
<text x="495" y="90" class="gl" textLength="70" lengthAdjust="spacingAndGlyphs">JP7</text>
<text x="676" y="203" class="gl" textLength="70" lengthAdjust="spacingAndGlyphs">JP5</text>
<text x="752" y="205" class="gl" textLength="70" lengthAdjust="spacingAndGlyphs">JP6</text>
<text x="825" y="200" class="gl" textLength="50" lengthAdjust="spacingAndGlyphs">R2</text>
<text x="918" y="400" class="gl" textLength="50" lengthAdjust="spacingAndGlyphs">R1</text>
<text x="498" y="658" class="gl" textLength="70" lengthAdjust="spacingAndGlyphs">JP1</text>
<text x="718" y="705" class="gl" textLength="70" lengthAdjust="spacingAndGlyphs">JP4</text>
<text transform="translate(662 695) rotate(40)" class="gl" textLength="60" lengthAdjust="spacingAndGlyphs">JP3</text>
<text transform="translate(544 404) rotate(-90)" class="gl" textLength="50" lengthAdjust="spacingAndGlyphs">X6</text>
<text transform="translate(640 525) rotate(-90)" class="gl" textLength="50" lengthAdjust="spacingAndGlyphs">U1</text>
<text transform="translate(795 270) rotate(90)" class="gl" textLength="262" lengthAdjust="spacingAndGlyphs">TINY45-20S</text>
</g>
<!-- board right -->
<g transform="translate(1000 375) scale(.33333)">
<path d="M-15,43H852Q856,43 856,47V853H-15" fill="none" stroke="#8fa82b" stroke-width="20"/>
<rect x="213" y="272" width="298" height="505" fill="none" stroke="#aaa" stroke-width="5"/>
<circle cx="250" cy="325" r="15" fill="none" stroke="#aaa" stroke-width="5"/>
<rect x="593" y="320" width="225" height="362" fill="none" stroke="#aaa" stroke-width="5"/><rect x="808" y="320" width="12" height="362" fill="#aaa"/><path d="M652,320V682" stroke="#aaa" stroke-width="4"/>
<g class="vt"><path d="M-5,513H175L250,590V745L182,813H-5"/><path d="M-5,573H205L220,590V630L155,695H-5"/><path d="M-5,638H145L170,612"/><path d="M97,432H150"/></g>
<circle cx="695" cy="378" r="40" fill="url(#g)" stroke="#bbb" stroke-width="4"/><circle cx="695" cy="500" r="38" fill="url(#g)" stroke="#bbb" stroke-width="4"/><circle cx="695" cy="625" r="40" fill="url(#g)" stroke="#bbb" stroke-width="4"/>
<path d="M562,310H630L685,368M562,730L685,635" fill="none" stroke="#a50d0d" stroke-width="60" stroke-linecap="round" stroke-linejoin="round"/>
<g fill="none" stroke="#ccc" stroke-width="4"><circle cx="695" cy="378" r="24"/><circle cx="695" cy="625" r="24"/></g>
<circle cx="695" cy="500" r="20" fill="#6a8a80" stroke="#ccc" stroke-width="4"/><path d="M670,520L720,480M672,385L718,368M672,635L718,612" stroke="#ddd" stroke-width="3"/>
<path d="M725,478V525M702,500H755" stroke="#9aaa20" stroke-width="2"/>
<g fill="none" stroke="#aaa" stroke-width="6"><circle cx="782" cy="380" r="12"/><circle cx="782" cy="502" r="12"/><circle cx="782" cy="625" r="12"/></g>
<g fill="url(#h)" stroke="#b8b8b8" stroke-width="2.500">
<rect x="148" y="295" width="55" height="30"/><rect x="148" y="415" width="55" height="30"/><rect x="148" y="595" width="55" height="30"/><rect x="148" y="715" width="55" height="30"/>
<rect x="535" y="295" width="55" height="30"/><rect x="535" y="415" width="55" height="30"/><rect x="535" y="595" width="55" height="30"/><rect x="535" y="715" width="55" height="30"/>
<rect x="50" y="409" width="47" height="49"/>
</g>
<path d="M175,285V335" stroke="#9aaa20" stroke-width="2"/><rect x="558" y="302" width="14" height="14" fill="#f01010"/>
<path d="M37,420V445M26,433H48" stroke="#9aaa20" stroke-width="2"/>
<text transform="translate(574 412) rotate(-90)" class="gl" textLength="60" lengthAdjust="spacingAndGlyphs">X2</text>
<text transform="translate(772 355) rotate(-90)" class="gl" style="font-size:30px">1</text>
<text transform="translate(772 478) rotate(-90)" class="gl" style="font-size:30px">2</text>
<text transform="translate(772 600) rotate(-90)" class="gl" style="font-size:30px">3</text>
<path d="M530,366H565M547,352V380" stroke="#bbb" stroke-width="2.500"/>
<path d="M595,165H632M610,125V178" stroke="#a50d0d" stroke-width="3" fill="none"/>
<text x="612" y="165" textLength="124" lengthAdjust="spacingAndGlyphs" style="font-size:58px;fill:#a50d0d">Letty</text>
<rect x="844" y="840" width="20" height="24" fill="none" stroke="#aef000" stroke-width="4"/><path d="M844,852H864" stroke="#aef000" stroke-width="3"/>
</g>
<!-- side tabs -->
<rect x="1557" y="172" width="29" height="157" fill="#444"/><rect x="1557" y="337" width="29" height="158" fill="#444"/><rect x="1557" y="502" width="29" height="158" fill="#444"/>
<rect x="1563" y="181" width="17" height="16" rx="1" fill="#1d8a3e"/><rect x="1568" y="185" width="7" height="7" fill="#2a9a50" stroke="#e8e8d0"/><path d="M1567,184V194M1570,183V194M1573,183V194M1576,184V194" stroke="#e0c820" stroke-width=".8" stroke-dasharray="2 6"/>
<text transform="translate(1567 206) rotate(90)" class="m" textLength="110" lengthAdjust="spacingAndGlyphs">MANUFACTURING</text>
<rect x="1563" y="358" width="17" height="18" rx="1.500" fill="#f5a623"/><path d="M1568,362H1576V365H1571V368H1575V371H1571V374H1568Z" fill="#666"/>
<text transform="translate(1567 386) rotate(90)" class="m" textLength="75" lengthAdjust="spacingAndGlyphs">FUSION 360</text>
<rect x="1563" y="523" width="17" height="18" rx="1.500" fill="#f5a623"/><path d="M1568,527H1576V530H1571V533H1575V536H1571V539H1568Z" fill="#666"/>
<text transform="translate(1567 552.500) rotate(90)" class="m" textLength="82" lengthAdjust="spacingAndGlyphs">FUSION TEAM</text>
<!-- status -->
<rect x="56" y="945" width="1548" height="25" fill="#ededed"/><rect x="56" y="944.500" width="1548" height="1" fill="#9a9a9a"/>
<text x="58" y="962.500" class="t" textLength="573" lengthAdjust="spacingAndGlyphs">Undo: Delete (2s ago) Left-click to select object to delete (Ctrl+right-click to delete group)</text>
<g transform="translate(1400 900) scale(.33333)"><path d="M483,145L440,172H465L452,202L497,172H472Z" fill="#12b54a"/><circle cx="546" cy="174" r="30" fill="#666"/><rect x="541" y="150" width="10" height="32" rx="3" fill="#fff"/><circle cx="546" cy="190" r="5.500" fill="#fff"/></g>
</g>
<rect x="56.500" y="38.500" width="1547" height="931" rx="5" fill="none" stroke="rgba(0,0,0,.14)"/>
</svg>
</body></html>
